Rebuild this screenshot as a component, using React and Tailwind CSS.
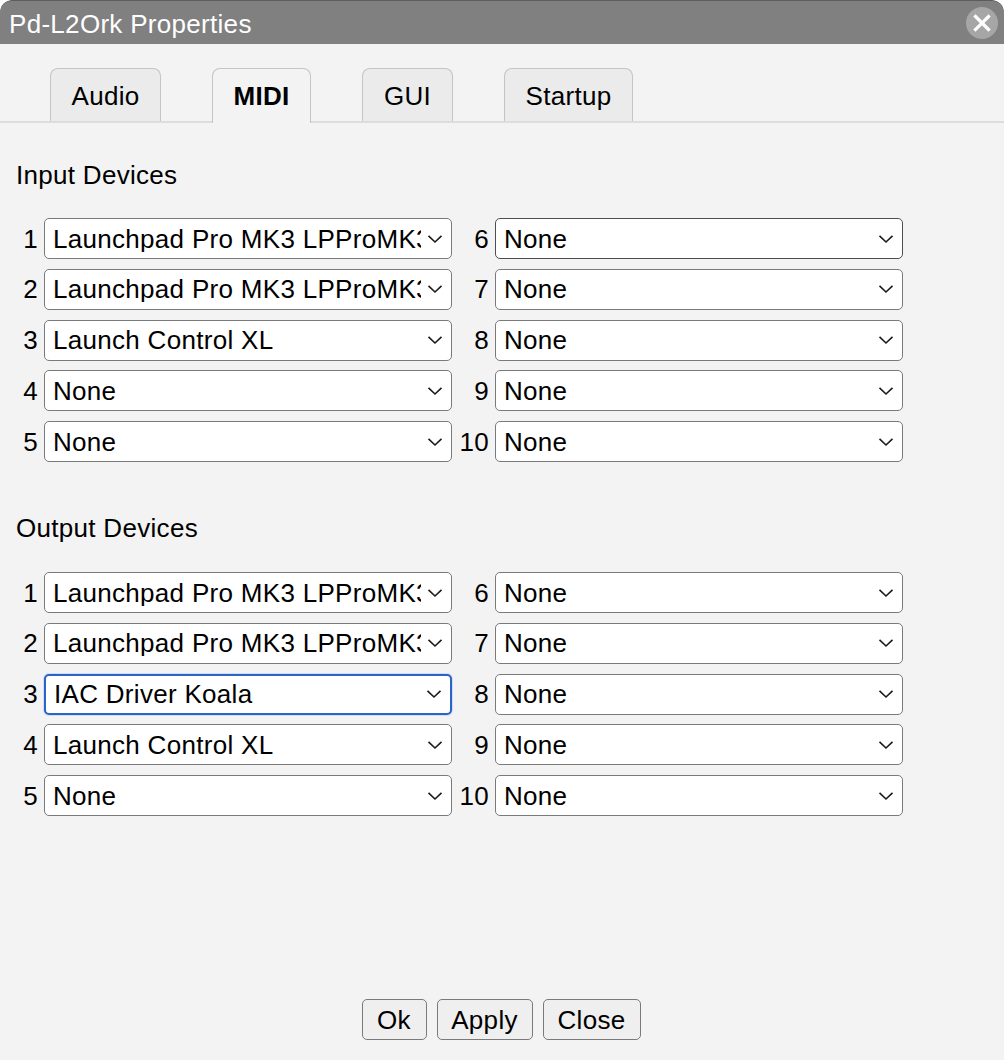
import React from 'react';

const inputDevices = [
  'Launchpad Pro MK3 LPProMK3 MIDI',
  'Launchpad Pro MK3 LPProMK3 DIN',
  'Launch Control XL',
  'None',
  'None',
  'None',
  'None',
  'None',
  'None',
  'None',
];

const outputDevices = [
  'Launchpad Pro MK3 LPProMK3 MIDI',
  'Launchpad Pro MK3 LPProMK3 DIN',
  'IAC Driver Koala',
  'Launch Control XL',
  'None',
  'None',
  'None',
  'None',
  'None',
  'None',
];

const tabs = [
  { label: 'Audio', w: 'w-[111px]' },
  { label: 'MIDI', w: 'w-[99px]', active: true },
  { label: 'GUI', w: 'w-[91px]' },
  { label: 'Startup', w: 'w-[129px]' },
];

function Chevron() {
  return (
    <svg width="16" height="10" viewBox="0 0 16 10" className="shrink-0">
      <path d="M1.5 1.8 L8 8 L14.5 1.8" fill="none" stroke="#1a1a1a" strokeWidth="1.6" />
    </svg>
  );
}

/** Fake dropdown, drawn so it renders the same everywhere. */
function Select({ value, focused, dark }) {
  const border = focused
    ? 'border-2 border-[#2b63c9] shadow-[0_0_0_1px_#cfdcf3]'
    : dark
    ? 'border-[1.5px] border-[#4e4e4e]'
    : 'border-[1.5px] border-[#7a7a7a]';
  return (
    <div className={`w-[408px] h-[41px] rounded-[5px] bg-white flex items-center gap-[6px] pl-[8px] pr-[8px] ${border}`}>
      <span className="flex-1 overflow-hidden whitespace-nowrap leading-none">{value}</span>
      <Chevron />
    </div>
  );
}

function DeviceGrid({ devices, focusIndex, darkIndex }) {
  return (
    <div className="flex flex-col gap-[9.75px]">
      {[0, 1, 2, 3, 4].map((i) => (
        <div key={i} className="flex items-center h-[41px]">
          <span className="w-[28px] pr-[6px] text-right leading-none">{i + 1}</span>
          <Select value={devices[i]} focused={focusIndex === i} dark={darkIndex === i} />
          <span className="w-[43px] pr-[6px] text-right leading-none">{i + 6}</span>
          <Select value={devices[i + 5]} focused={focusIndex === i + 5} dark={darkIndex === i + 5} />
        </div>
      ))}
    </div>
  );
}

export default function App() {
  return (
    <div className="w-[1004px] h-[1060px] bg-white font-['Liberation_Sans',Arial,sans-serif] text-[26px] tracking-[0.3px] text-black">
      <div className="w-full h-full bg-[#f3f3f3] rounded-t-[12px] flex flex-col overflow-hidden">
        {/* title bar */}
        <div className="h-[44px] shrink-0 bg-[#808080] border-t border-[#5c5c5c] rounded-t-[12px] flex items-center justify-between pl-[9px] pr-[6px]">
          <span className="text-white leading-none pt-[3px]">Pd-L2Ork Properties</span>
          <div className="w-[32px] h-[32px] rounded-full bg-[#a6a6a6] flex items-center justify-center">
            <svg width="18" height="18" viewBox="0 0 18 18">
              <path d="M2.5 2.5 L15.5 15.5 M15.5 2.5 L2.5 15.5" stroke="#fff" strokeWidth="3.2" strokeLinecap="square" />
            </svg>
          </div>
        </div>

        {/* tabs */}
        <div className="pt-[24px] pl-[50px] flex items-end gap-[51px] border-b-2 border-[#dddddd] h-[79px] shrink-0">
          {tabs.map((t) =>
            t.active ? (
              <div
                key={t.label}
                className={`${t.w} h-[55px] -mb-[2px] pb-[1px] bg-[#f3f3f3] border border-b-0 border-[#c4c4c4] rounded-t-[8px] flex items-center justify-center font-bold leading-none`}
              >
                {t.label}
              </div>
            ) : (
              <div
                key={t.label}
                className={`${t.w} h-[53px] pt-[1px] bg-[#ebebeb] border border-b-0 border-[#c4c4c4] rounded-t-[8px] flex items-center justify-center leading-none`}
              >
                {t.label}
              </div>
            )
          )}
        </div>

        {/* content */}
        <div className="px-[16px] flex flex-col flex-1">
          <div className="mt-[38px] h-[28px] leading-[28px]">Input Devices</div>
          <div className="mt-[29px]">
            <DeviceGrid devices={inputDevices} darkIndex={5} />
          </div>

          <div className="mt-[52px] h-[28px] leading-[28px]">Output Devices</div>
          <div className="mt-[30px]">
            <DeviceGrid devices={outputDevices} focusIndex={2} />
          </div>

          <div className="flex-1" />
          <div className="flex justify-center gap-[10px] pb-[20px] pr-[2px]">
            {[
              ['Ok', 'w-[65px]'],
              ['Apply', 'w-[96px]'],
              ['Close', 'w-[98px]'],
            ].map(([label, w]) => (
              <div
                key={label}
                className={`${w} h-[41px] rounded-[5px] bg-[#efefef] border-[1.5px] border-[#7a7a7a] flex items-center justify-center leading-none`}
              >
                {label}
              </div>
            ))}
          </div>
        </div>
      </div>
    </div>
  );
}
